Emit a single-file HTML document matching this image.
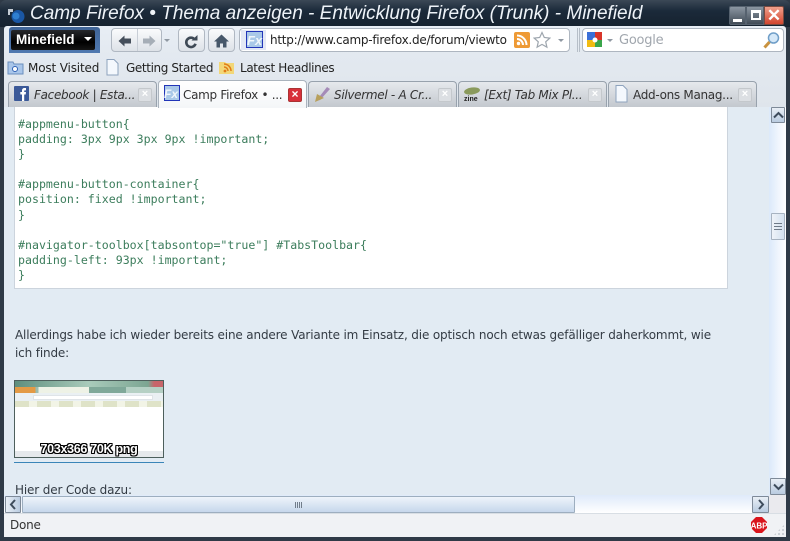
<!DOCTYPE html>
<html><head><meta charset="utf-8"><style>
html,body{margin:0;padding:0;width:790px;height:541px;overflow:hidden;background:#2f3a47}
*{box-sizing:border-box}
.a{position:absolute;white-space:nowrap}
.ui{font-family:"DejaVu Sans","Liberation Sans",sans-serif;font-size:12px;color:#222;letter-spacing:-.25px}
.code{font-family:"DejaVu Sans Mono","Liberation Mono",monospace;font-size:11.6px;color:#3c7d5c;line-height:15.1px;left:18px}
.body{font-family:"DejaVu Sans","Liberation Sans",sans-serif;font-size:12px;color:#333b44;letter-spacing:-.15px}
.tab{position:absolute;top:81px;height:26px;border:1px solid #98a2ad;border-bottom:none;border-radius:4px 4px 0 0;background:linear-gradient(#e6e9ed,#c3c8ce)}
.tab.on{background:linear-gradient(#fff,#f4f6f8);height:28px;top:80px;border-color:#aab3bd;z-index:3}
.tx{position:absolute;top:6px;font-family:"DejaVu Sans",sans-serif;font-size:12px;font-style:italic;color:#333;white-space:nowrap;letter-spacing:-.3px}
.x{position:absolute;top:6px;width:14px;height:14px;border:1px solid #c4c8cc;background:#dcdfe3;border-radius:2px;color:#fff;font:bold 11px/11px "Liberation Sans",sans-serif;text-align:center}
.btn{position:absolute;top:28px;height:24px;border:1px solid #b0b8c2;border-radius:4px;background:linear-gradient(#fafbfc,#dde2e8)}
.sb{position:absolute;border:1px solid #7e8a98;background:linear-gradient(#e9eff6,#b9cbe0);border-radius:1px}
</style></head><body>
<!-- title -->
<div class="a" style="left:0;top:0;width:790px;height:27px;background:linear-gradient(#3b4856,#1b2a3a 40%,#16222f);border-radius:6px 6px 0 0"></div>
<svg class="a" style="left:8px;top:7px" width="18" height="18"><circle cx="10" cy="9.500" r="6.500" fill="#1a57a5"/><circle cx="8" cy="9" r="3.500" fill="#2f7fd0"/><path d="M0 2h5v3H2v3H0z" fill="#c4ccd4"/></svg>
<div class="a" style="left:30px;top:2px;font:italic 19px/24px 'Liberation Sans',sans-serif;color:#eef3f8;letter-spacing:0">Camp Firefox • Thema anzeigen - Entwicklung Firefox (Trunk) - Minefield</div>
<div class="a" style="left:729px;top:6px;width:17px;height:19px;border:1px solid #56626f;background:linear-gradient(#8b96a2,#414c57);border-radius:2px 0 0 2px"><div class="a" style="left:3px;top:12px;width:9px;height:3px;background:#fff"></div></div>
<div class="a" style="left:746px;top:6px;width:18px;height:19px;border:1px solid #56626f;background:linear-gradient(#8b96a2,#414c57)"><div class="a" style="left:4px;top:3px;width:10px;height:10px;border:2px solid #fff;border-top-width:3px"></div></div>
<div class="a" style="left:764px;top:6px;width:20px;height:19px;border:1px solid #7a4a40;background:linear-gradient(#f0a08c,#d2452f);border-radius:0 2px 2px 0;color:#fff;font:bold 17px/17px 'Liberation Sans',sans-serif;text-align:center">✕</div>
<!-- chrome -->
<div class="a" style="left:4px;top:26px;width:782px;height:82px;background:linear-gradient(#e8eef5,#e3e9f0 35%,#dfe5ec);border-radius:3px 3px 0 0"></div>
<div class="a" style="left:9px;top:27px;width:91px;height:26px;background:linear-gradient(#3f6496,#5079b0);border-radius:3px 3px 0 0"></div>
<div class="a" style="left:11px;top:30px;width:84px;height:20px;background:linear-gradient(#26282c,#000 60%,#151515);border-radius:2px;color:#fff;font:bold 13.5px/20px 'Liberation Sans',sans-serif;padding-left:5px">Minefield<span style="position:absolute;left:73px;top:7px;width:0;height:0;border:4px solid transparent;border-top:4px solid #fff"></span></div>
<div class="btn" style="left:111px;width:51px"></div>
<div class="a" style="left:137px;top:29px;width:1px;height:22px;background:#c8ced6"></div>
<svg class="a" style="left:118px;top:35px" width="13" height="12"><path d="M6.500 0.500L0.500 6l6 5.500V8.500H13v-5H6.500z" fill="#454f5b"/></svg>
<svg class="a" style="left:143px;top:35px" width="13" height="12"><path d="M6.500 0.500L12.500 6l-6 5.500V8.500H0v-5h6.500z" fill="#a6aeb7"/></svg>
<div class="a" style="left:164px;top:39px;border:3px solid transparent;border-top:3px solid #8f98a2;width:0;height:0"></div>
<div class="btn" style="left:178px;width:27px"></div>
<svg class="a" style="left:184px;top:35px" width="14" height="14"><path d="M10.500 4.200a4.700 4.700 0 1 0 1 4.500" fill="none" stroke="#3f4a56" stroke-width="2.600"/><path d="M7.500 5.500h6V0z" fill="#3f4a56"/></svg>
<div class="btn" style="left:208px;width:27px"></div>
<svg class="a" style="left:214px;top:34px" width="15" height="14"><path d="M7.500 0.500L0 7.500h2.500V13.500H6V9.500h3v4h3.500V7.500H15z" fill="#47586a"/></svg>
<div class="a" style="left:239px;top:28px;width:331px;height:24px;border:1px solid #aeb6c0;border-radius:4px;background:#fff"></div>
<div class="a" style="left:241px;top:30px;width:25px;height:20px;background:#e3e8f5"></div>
<svg class="a" style="left:246px;top:31px" width="18" height="18"><rect x=".5" y=".5" width="16" height="16" fill="#a9c8e8" stroke="#2235b8"/><text x="1" y="14" font-family="Liberation Sans" font-size="13" font-weight="bold" font-style="italic" fill="#f0f6fb">Fx</text></svg>
<div class="a ui" style="left:270px;top:33px;letter-spacing:-.26px">http://www.camp-firefox.de/forum/viewto</div>
<svg class="a" style="left:514px;top:32px" width="16" height="16"><rect width="16" height="16" rx="2" fill="#ee9a35"/><circle cx="4.500" cy="11.500" r="1.700" fill="#fff"/><path d="M3 7a6 6 0 0 1 6 6M3 3.500A9.500 9.500 0 0 1 12.500 13" stroke="#fff" stroke-width="2" fill="none"/></svg>
<svg class="a" style="left:533px;top:31px" width="18" height="18"><path d="M9 1.500l2.300 5 5.500.6-4.100 3.700 1.200 5.400L9 13.400l-4.900 2.800 1.200-5.400L1.200 7.100l5.500-.6z" fill="#fff" stroke="#9ea6ae" stroke-width="1.200"/></svg>
<div class="a" style="left:558px;top:39px;border:3px solid transparent;border-top:3px solid #8f98a2;width:0;height:0"></div>
<div class="a" style="left:577px;top:28px;width:1px;height:24px;background:#b6bec8;box-shadow:2px 0 0 #b6bec8"></div>
<div class="a" style="left:582px;top:28px;width:202px;height:24px;border:1px solid #aeb6c0;border-radius:4px;background:#fff"></div>
<svg class="a" style="left:586px;top:31px" width="18" height="18"><rect x="1" y="1" width="8" height="8" fill="#3a6fd8"/><rect x="9" y="1" width="7" height="8" fill="#d8352a"/><rect x="1" y="9" width="8" height="7" fill="#f1bb12"/><rect x="9" y="9" width="7" height="7" fill="#3aa54a"/><circle cx="9" cy="9" r="2.500" fill="#fff"/></svg>
<div class="a" style="left:607px;top:39px;border:3px solid transparent;border-top:3px solid #8f98a2;width:0;height:0"></div>
<div class="a ui" style="left:619px;top:33px;color:#a0a6ad;font-size:13px">Google</div>
<svg class="a" style="left:762px;top:31px" width="19" height="19"><circle cx="11.500" cy="7" r="5" fill="#d5e8f8" stroke="#6f9ec8" stroke-width="1.500"/><path d="M7.500 11L2.500 16.500" stroke="#c9923f" stroke-width="3"/></svg>
<!-- bookmarks -->
<svg class="a" style="left:7px;top:59px" width="17" height="16"><path d="M1 3h5l1 2h9v10H1z" fill="#a9c6ea" stroke="#6b8fbd"/><circle cx="8" cy="10" r="2.500" fill="#fff" stroke="#2f62b5"/></svg>
<div class="a ui" style="left:28px;top:61px;letter-spacing:-.15px">Most Visited</div>
<svg class="a" style="left:105px;top:59px" width="15" height="17"><path d="M2 .5h7l4 4v11.500H2z" fill="#f4f8fd" stroke="#8ea3bd"/></svg>
<div class="a ui" style="left:126px;top:61px;letter-spacing:-.38px">Getting Started</div>
<svg class="a" style="left:219px;top:59px" width="16" height="16"><path d="M0 3h6l1 1h8v11H0z" fill="#f2d778"/><circle cx="6" cy="12" r="1.400" fill="#e07b16"/><path d="M5 8a4 4 0 0 1 4 4M5 5a7 7 0 0 1 7 7" stroke="#e07b16" stroke-width="1.500" fill="none"/></svg>
<div class="a ui" style="left:240px;top:61px;letter-spacing:-.37px">Latest Headlines</div>
<!-- tabs -->
<div class="tab" style="left:8px;width:149px"><svg class="a" style="left:5px;top:4px" width="16" height="16"><rect width="15" height="15" rx="1" fill="#3b5998"/><path d="M8 15V8.500H6.300V6H8V4.500C8 3 9 2 10.500 2H12v2.400h-1c-.6 0-.8.3-.8.8V6H12l-.3 2.500h-1.500V15z" fill="#fff"/></svg><span class="tx" style="left:25px">Facebook | Esta...</span><span class="x" style="left:129px">×</span></div>
<div class="tab on" style="left:158px;width:149px"><svg class="a" style="left:5px;top:4px" width="18" height="18"><rect x=".5" y=".5" width="15" height="15" fill="#a9c8e8" stroke="#2235b8"/><text x="0" y="13" font-family="Liberation Sans" font-size="12" font-weight="bold" font-style="italic" fill="#f0f6fb">Fx</text></svg><span class="tx" style="left:24px;top:7px;font-style:normal">Camp Firefox • ...</span><span class="x" style="left:129px;top:7px;background:#d8303a;border-color:#a33;font-size:12px">×</span></div>
<div class="tab" style="left:308px;width:149px"><svg class="a" style="left:4px;top:3px" width="18" height="18"><path d="M3 16L14 2l3 2L7 15z" fill="#a58bb8"/><path d="M2 17l2-8 7 4z" fill="#b8a05c"/></svg><span class="tx" style="left:25px">Silvermel - A Cr...</span><span class="x" style="left:129px">×</span></div>
<div class="tab" style="left:458px;width:149px"><svg class="a" style="left:4px;top:3px" width="18" height="18"><ellipse cx="9" cy="6" rx="8" ry="3.500" fill="#8a9a5c" transform="rotate(-8 9 6)"/><text x="1" y="16" font-family="Liberation Sans" font-size="7" font-weight="bold" fill="#222">zine</text></svg><span class="tx" style="left:25px">[Ext] Tab Mix Pl...</span><span class="x" style="left:129px">×</span></div>
<div class="tab" style="left:608px;width:149px"><svg class="a" style="left:5px;top:3px" width="15" height="18"><path d="M2 .5h7l4 4v12.500H2z" fill="#f4f8fd" stroke="#8ea3bd"/></svg><span class="tx" style="left:24px;font-style:normal">Add-ons Manag...</span><span class="x" style="left:129px">×</span></div>
<!-- content -->
<div class="a" style="left:4px;top:107px;width:765px;height:389px;background:#e2ebf3;overflow:hidden">
<div class="a" style="left:10px;top:-2px;width:714px;height:184px;background:#fff;border:1px solid #ccd4dd"></div>
</div>
<div class="a code" style="top:117px">#appmenu-button{<br>padding: 3px 9px 3px 9px !important;<br>}<br><br>#appmenu-button-container{<br>position: fixed !important;<br>}<br><br>#navigator-toolbox[tabsontop="true"] #TabsToolbar{<br>padding-left: 93px !important;<br>}</div>
<div class="a body" style="left:15px;top:326px;line-height:18px">Allerdings habe ich wieder bereits eine andere Variante im Einsatz, die optisch noch etwas gefälliger daherkommt, wie<br>ich finde:</div>
<!-- thumb -->
<div class="a" style="left:14px;top:380px;width:150px;height:78px;border:1px solid #4d5f5c;background:#fff;overflow:hidden">
<div class="a" style="left:0;top:0;width:148px;height:7px;background:linear-gradient(90deg,#5f8f7e,#a9cbbb 50%,#7ca592 90%,#c8656a 94%,#c8656a)"></div>
<div class="a" style="left:0;top:6px;width:148px;height:6px;background:linear-gradient(90deg,#e39a45 0,#e39a45 14%,#9dbcaf 14%,#9dbcaf 16%,#eef2e6 16%,#eef2e6 50%,#7fa899 50%,#7fa899 75%,#b5d0c4 75%)"></div>
<div class="a" style="left:0;top:12px;width:148px;height:8px;background:#eaf0f3"></div>
<div class="a" style="left:18px;top:14px;width:120px;height:5px;background:#fff;border:1px solid #dfe4e8"></div>
<div class="a" style="left:0;top:20px;width:148px;height:6px;background:repeating-linear-gradient(90deg,#dfe3c8 0,#dfe3c8 14px,#f2f4e6 14px,#f2f4e6 22px)"></div>
<div class="a" style="left:0;top:70px;width:148px;height:6px;background:#e6e9ec"></div>
<div class="a" style="left:0;top:61px;width:148px;text-align:center;font:bold 12.500px/14px 'Liberation Sans',sans-serif;color:#fff;letter-spacing:-.3px;text-shadow:-1px 0 #000,1px 0 #000,0 -1px #000,0 1px #000,-1px -1px #000,1px 1px #000,1px -1px #000,-1px 1px #000">703x366 70K png</div>
</div>
<div class="a" style="left:14px;top:462px;width:150px;height:1px;background:#3a85b8"></div>
<div class="a body" style="left:15px;top:481px;line-height:18px;height:15px;overflow:hidden">Hier der Code dazu:</div>
<!-- v scrollbar -->
<div class="a" style="left:769px;top:107px;width:17px;height:389px;background:linear-gradient(90deg,#dce9fa,#fff)"></div>
<div class="sb" style="left:771px;top:107px;width:14px;height:16px"><svg class="a" style="left:1px;top:3px" width="11" height="8"><path d="M1 6.500L5.500 2 10 6.500" fill="none" stroke="#3e4c5c" stroke-width="2"/></svg></div>
<div class="sb" style="left:771px;top:213px;width:14px;height:27px;background:linear-gradient(90deg,#eef3f9,#d5e1ef);border-color:#a7b3c1"><div class="a" style="left:2px;top:9px;width:8px;height:7px;border-top:1px solid #6e7a88;border-bottom:1px solid #6e7a88"></div><div class="a" style="left:2px;top:12px;width:8px;height:1px;background:#6e7a88"></div></div>
<div class="sb" style="left:770px;top:478px;width:16px;height:17px"><svg class="a" style="left:2px;top:4px" width="11" height="8"><path d="M1 1.500L5.500 6 10 1.500" fill="none" stroke="#3e4c5c" stroke-width="2"/></svg></div>
<!-- h scrollbar -->
<div class="a" style="left:4px;top:495px;width:782px;height:18px;background:linear-gradient(#dfeafa,#fff)"></div>
<div class="sb" style="left:5px;top:496px;width:16px;height:17px;background:linear-gradient(90deg,#e9eff6,#b9cbe0)"><svg class="a" style="left:3px;top:2px" width="8" height="11"><path d="M6 1L2 5.500 6 10" fill="none" stroke="#3e4c5c" stroke-width="2"/></svg></div>
<div class="sb" style="left:22px;top:496px;width:553px;height:17px;background:linear-gradient(#eef4fb,#c6d7ec);border-color:#9daebf"><div class="a" style="left:272px;top:5px;width:7px;height:6px;background:repeating-linear-gradient(90deg,#717d8a 0,#717d8a 1px,transparent 1px,transparent 2px)"></div></div>
<div class="sb" style="left:752px;top:496px;width:17px;height:17px"><svg class="a" style="left:4px;top:2px" width="8" height="11"><path d="M2 1l4 4.500L2 10" fill="none" stroke="#3e4c5c" stroke-width="2"/></svg></div>
<div class="a" style="left:769px;top:495px;width:17px;height:18px;background:#eaeaee"></div>
<!-- status -->
<div class="a" style="left:4px;top:513px;width:782px;height:24px;background:#f0f2f5;border-top:1px solid #d8dee4"></div>
<div class="a ui" style="left:10px;top:518px;color:#333">Done</div>
<svg class="a" style="left:751px;top:517px" width="16" height="16"><path d="M5 0h6l5 5v6l-5 5H5l-5-5V5z" fill="#d9141c"/><text x="8" y="11.500" text-anchor="middle" font-family="Liberation Sans" font-size="8" font-weight="bold" fill="#fff">ABP</text></svg>
<div class="a" style="left:773px;top:524px;width:12px;height:12px;background:radial-gradient(circle,#c9ced4 1px,transparent 1.300px) 0 0/4px 4px;clip-path:polygon(100% 0,100% 100%,0 100%)"></div>
</body></html>
